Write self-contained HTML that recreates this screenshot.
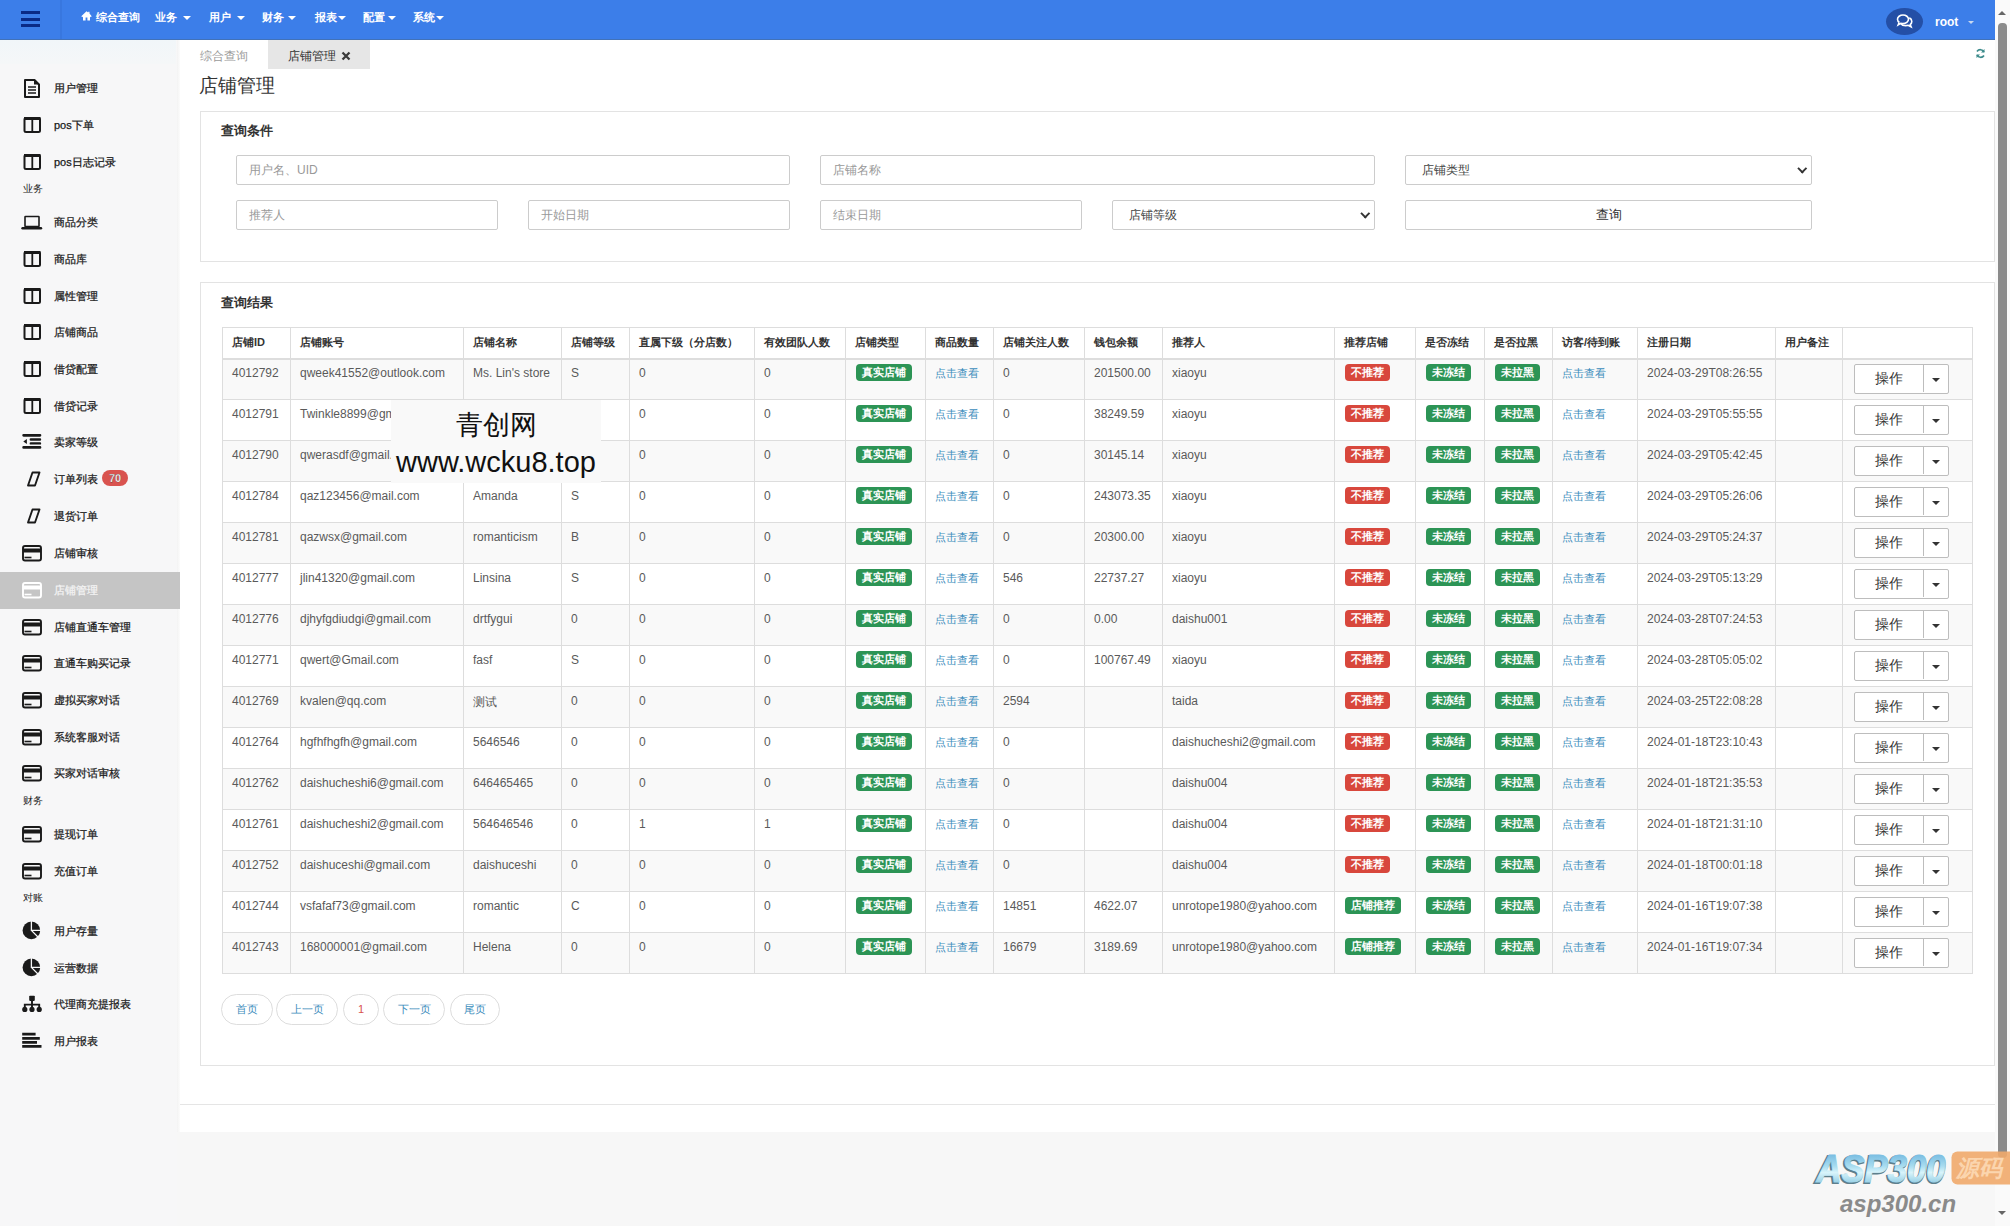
<!DOCTYPE html><html><head><meta charset="utf-8"><style>
*{box-sizing:border-box;margin:0;padding:0}
html,body{width:2010px;height:1226px;overflow:hidden;background:#f7f7f7;font-family:"Liberation Sans",sans-serif;color:#333}
#top{position:absolute;left:0;top:0;width:1995px;height:40px;background:#3c7ee9}
.ham{position:absolute;left:21px;width:19px;height:3px;background:#0a2a86}
.vdiv{position:absolute;left:60px;top:0;width:2px;height:40px;background:#3877df}
.nav{position:absolute;top:10px;color:#fff;font-size:11px;font-weight:bold;white-space:nowrap;line-height:14px}
.ncar{position:absolute;top:16px;width:0;height:0;border-left:4px solid transparent;border-right:4px solid transparent;border-top:4px solid #fff}
.caret{display:inline-block;width:0;height:0;border-left:4px solid transparent;border-right:4px solid transparent;border-top:4px solid #fff;vertical-align:middle;margin-left:4px;margin-top:-2px}
#chat{position:absolute;left:1885.5px;top:8px;width:37px;height:27px;border-radius:50%;background:#244fa6}
#root{position:absolute;left:1935px;top:15px;color:#fff;font-size:12px;font-weight:bold;line-height:14px}
#side{position:absolute;left:0;top:40px;width:177px;height:1186px;background:#f7f7f8}
#sideedge{position:absolute;left:177px;top:40px;width:4px;height:1092px;background:linear-gradient(to right,#f3f3f3,#fff)}
.si{position:absolute;left:0;width:180px;height:36px}
.si .tx{position:absolute;left:54px;top:0;line-height:36px;font-size:11px;color:#1a1a1a;white-space:nowrap;-webkit-text-stroke:0.25px #1a1a1a}
.si svg{position:absolute;left:22px;top:9px}
.si.act{background:#c5c5c5;height:37px}
.si.act .tx{color:#f4f4f4;-webkit-text-stroke:0.25px #f4f4f4}
.badge{display:inline-block;background:#d9534f;color:#fff;font-weight:bold;font-size:11px;line-height:16px;height:16px;padding:0 7px;border-radius:8px;margin-left:4px;vertical-align:1px}
.sl{position:absolute;left:23px;font-size:10px;color:#222;line-height:12px}
#main{position:absolute;left:180px;top:40px;width:1815px;height:1092px;background:#fff}
#scroll{position:absolute;left:1995px;top:0;width:15px;height:1226px;background:#fafafa}
#thumb{position:absolute;left:1998px;top:23px;width:8.7px;height:1135px;border-radius:4px;background:#8b8b8b}
.tab0{position:absolute;left:200px;top:48px;font-size:12px;color:#9a9a9a}
.tab1{position:absolute;left:268px;top:40px;width:102px;height:29px;background:#e6e6e6;font-size:12px;color:#333;padding-left:20px;line-height:32px}
h1{position:absolute;left:199px;top:73px;font-size:19px;font-weight:normal;color:#333}
.panel{position:absolute;left:200px;width:1795px;border:1px solid #e3e3e3;background:#fff}
.ptitle{position:absolute;left:20px;font-size:13px;margin-top:-2px;font-weight:bold;color:#333}
.inp{position:absolute;height:30px;border:1px solid #ccc;border-radius:2px;background:#fff;font-size:12px;color:#999;padding-left:12px;line-height:28px}
.sel{color:#444;padding-left:16px}
.sel:after{content:"";position:absolute;right:5.5px;top:8.5px;width:4.5px;height:4.5px;border-right:2px solid #333;border-bottom:2px solid #333;transform:rotate(45deg)}
.btn{position:absolute;height:30px;border:1px solid #ccc;border-radius:2px;background:#fff;font-size:13px;color:#333;text-align:center;line-height:28px}
table{position:absolute;left:222px;top:327px;border-collapse:collapse;table-layout:fixed}
td,th{border:1px solid #ddd;font-size:12px;vertical-align:top;padding:6.5px 0 0 9px;text-align:left;white-space:nowrap;overflow:hidden}
th{height:31px;color:#333;font-weight:bold;border-bottom:2px solid #ddd;padding-top:7px;font-size:11px}
td{height:41px;color:#5a5a5a}
tr.odd td{background:#f9f9f9}
.lbl{display:inline-block;color:#fff;font-size:11px;font-weight:bold;line-height:17px;height:17px;padding:0 6px;border-radius:4px;position:relative;top:-2px;left:1px}
.g{background:#2c9455}
.r{background:#d8473c}
.lnk{color:#3c8dbc;font-size:11px}
.op{position:absolute;height:29.5px;border:1px solid #bdbdbd;border-radius:2px;background:#fff}
.op .a{position:absolute;left:0;top:0;width:69px;height:27px;border-right:1px solid #bdbdbd;font-size:14px;color:#333;text-align:center;line-height:27px}
.op .c{position:absolute;left:77px;top:12.5px;width:0;height:0;border-left:4px solid transparent;border-right:4px solid transparent;border-top:4px solid #333}
.pg{position:absolute;top:993.5px;height:31px;border:1px solid #ddd;border-radius:16px;background:#fff;font-size:11px;color:#3c8dbc;text-align:center;line-height:29px}
#wm{position:absolute;left:391px;top:400px;width:210px;height:83px;background:#f9f9f9;text-align:center;color:#111}
</style></head><body>
<div id="top"><div class="ham" style="top:11px"></div><div class="ham" style="top:17.5px"></div><div class="ham" style="top:24px"></div><div class="vdiv"></div><div style="position:absolute;left:0;top:38.5px;width:1995px;height:1.5px;background:#4272b8"></div>
<div class="nav" style="left:95.5px">综合查询</div>
<div class="nav" style="left:155px">业务</div>
<div class="ncar" style="left:183px"></div>
<div class="nav" style="left:209px">用户</div>
<div class="ncar" style="left:237px"></div>
<div class="nav" style="left:262px">财务</div>
<div class="ncar" style="left:288px"></div>
<div class="nav" style="left:314.5px">报表</div>
<div class="ncar" style="left:338px"></div>
<div class="nav" style="left:363px">配置</div>
<div class="ncar" style="left:387.5px"></div>
<div class="nav" style="left:413px">系统</div>
<div class="ncar" style="left:436px"></div>
<svg style="position:absolute;left:81px;top:11px" width="11" height="10" viewBox="0 0 11 10"><path d="M5.5 0.3L0.3 5.2l1 1L2 5.6V9.6h2.6V6.6h1.8v3h2.6V5.6l0.7 0.6 1-1L8.5 2.6V0.8H7.2v0.7z" fill="#fff"/></svg>
<div id="chat"><svg width="37" height="27" viewBox="0 0 37 27"><path d="M13.5 14.5c-1.2-0.6-2-1.8-2-3.2 0-2.4 2.5-4.3 5.5-4.3s5.5 1.9 5.5 4.3-2.5 4.3-5.5 4.3c-0.8 0-1.5-0.1-2.2-0.3l-2.6 1.5 0.8-2" fill="none" stroke="#fff" stroke-width="1.6"/><path d="M23.3 9.8c1.5 0.8 2.5 2.1 2.5 3.6 0 1.2-0.6 2.3-1.6 3.1l0.9 2.3-3-1.5c-0.7 0.2-1.5 0.3-2.3 0.3-2.2 0-4.2-0.9-5.2-2.2" fill="none" stroke="#fff" stroke-width="1.6"/></svg></div>
<div id="root">root</div><div class="ncar" style="left:1968px;top:20.5px;border-top-color:#c8d8f0;border-left-width:3.5px;border-right-width:3.5px;border-top-width:3px"></div>
</div>
<div id="side"></div><div id="sideedge"></div><div style="position:absolute;left:0;top:40px;width:176px;height:24px;background:linear-gradient(#f1f6f9,#f5f7f8)"></div>
<div class="si" style="top:70px"><svg width="50" height="36" viewBox="0 -18 50 36" style="position:absolute;left:0;top:0"><path d="M25 -8h9.5l4.5 4.5v12.5h-14z" fill="none" stroke="#1a1a1a" stroke-width="2" stroke-linejoin="round"/><path d="M34 -8.5v5h5" fill="#1a1a1a"/><path d="M28 -1h8M28 2h8M28 5h8" stroke="#1a1a1a" stroke-width="1.4"/></svg><div class="tx">用户管理</div></div>
<div class="si" style="top:107px"><svg width="50" height="36" viewBox="0 -18 50 36" style="position:absolute;left:0;top:0"><rect x="24.5" y="-7" width="15.5" height="14" rx="1.5" fill="none" stroke="#1a1a1a" stroke-width="2"/><path d="M24 -6.5h16.5" stroke="#1a1a1a" stroke-width="3"/><path d="M32.3 -7v14" stroke="#1a1a1a" stroke-width="1.8"/></svg><div class="tx">pos下单</div></div>
<div class="si" style="top:144px"><svg width="50" height="36" viewBox="0 -18 50 36" style="position:absolute;left:0;top:0"><rect x="24.5" y="-7" width="15.5" height="14" rx="1.5" fill="none" stroke="#1a1a1a" stroke-width="2"/><path d="M24 -6.5h16.5" stroke="#1a1a1a" stroke-width="3"/><path d="M32.3 -7v14" stroke="#1a1a1a" stroke-width="1.8"/></svg><div class="tx">pos日志记录</div></div>
<div class="sl" style="top:183px">业务</div>
<div class="si" style="top:204px"><svg width="50" height="36" viewBox="0 -18 50 36" style="position:absolute;left:0;top:0"><rect x="25" y="-5.5" width="14" height="10" rx="0.5" fill="none" stroke="#1a1a1a" stroke-width="1.6"/><path d="M22.5 6.2H41" stroke="#1a1a1a" stroke-width="2.4" stroke-linecap="round"/></svg><div class="tx">商品分类</div></div>
<div class="si" style="top:241px"><svg width="50" height="36" viewBox="0 -18 50 36" style="position:absolute;left:0;top:0"><rect x="24.5" y="-7" width="15.5" height="14" rx="1.5" fill="none" stroke="#1a1a1a" stroke-width="2"/><path d="M24 -6.5h16.5" stroke="#1a1a1a" stroke-width="3"/><path d="M32.3 -7v14" stroke="#1a1a1a" stroke-width="1.8"/></svg><div class="tx">商品库</div></div>
<div class="si" style="top:278px"><svg width="50" height="36" viewBox="0 -18 50 36" style="position:absolute;left:0;top:0"><rect x="24.5" y="-7" width="15.5" height="14" rx="1.5" fill="none" stroke="#1a1a1a" stroke-width="2"/><path d="M24 -6.5h16.5" stroke="#1a1a1a" stroke-width="3"/><path d="M32.3 -7v14" stroke="#1a1a1a" stroke-width="1.8"/></svg><div class="tx">属性管理</div></div>
<div class="si" style="top:314px"><svg width="50" height="36" viewBox="0 -18 50 36" style="position:absolute;left:0;top:0"><rect x="24.5" y="-7" width="15.5" height="14" rx="1.5" fill="none" stroke="#1a1a1a" stroke-width="2"/><path d="M24 -6.5h16.5" stroke="#1a1a1a" stroke-width="3"/><path d="M32.3 -7v14" stroke="#1a1a1a" stroke-width="1.8"/></svg><div class="tx">店铺商品</div></div>
<div class="si" style="top:351px"><svg width="50" height="36" viewBox="0 -18 50 36" style="position:absolute;left:0;top:0"><rect x="24.5" y="-7" width="15.5" height="14" rx="1.5" fill="none" stroke="#1a1a1a" stroke-width="2"/><path d="M24 -6.5h16.5" stroke="#1a1a1a" stroke-width="3"/><path d="M32.3 -7v14" stroke="#1a1a1a" stroke-width="1.8"/></svg><div class="tx">借贷配置</div></div>
<div class="si" style="top:388px"><svg width="50" height="36" viewBox="0 -18 50 36" style="position:absolute;left:0;top:0"><rect x="24.5" y="-7" width="15.5" height="14" rx="1.5" fill="none" stroke="#1a1a1a" stroke-width="2"/><path d="M24 -6.5h16.5" stroke="#1a1a1a" stroke-width="3"/><path d="M32.3 -7v14" stroke="#1a1a1a" stroke-width="1.8"/></svg><div class="tx">借贷记录</div></div>
<div class="si" style="top:424px"><svg width="50" height="36" viewBox="0 -18 50 36" style="position:absolute;left:0;top:0"><path d="M23.6 -6.7H40M23.6 5.4H40" stroke="#1a1a1a" stroke-width="2.7" stroke-linecap="round"/><path d="M30.8 -2.5H40M30.8 1.4H40" stroke="#1a1a1a" stroke-width="2.4" stroke-linecap="round"/><path d="M23.3 -0.5l3.6 -2.6v5.2z" fill="#1a1a1a"/></svg><div class="tx">卖家等级</div></div>
<div class="si" style="top:461px"><svg width="50" height="36" viewBox="0 -18 50 36" style="position:absolute;left:0;top:0"><path d="M32.5 -6.5h7l-4.5 13h-7z" fill="none" stroke="#1a1a1a" stroke-width="1.9" stroke-linejoin="round"/></svg><div class="tx">订单列表<span class="badge">70</span></div></div>
<div class="si" style="top:498px"><svg width="50" height="36" viewBox="0 -18 50 36" style="position:absolute;left:0;top:0"><path d="M32.5 -6.5h7l-4.5 13h-7z" fill="none" stroke="#1a1a1a" stroke-width="1.9" stroke-linejoin="round"/></svg><div class="tx">退货订单</div></div>
<div class="si" style="top:535px"><svg width="50" height="36" viewBox="0 -18 50 36" style="position:absolute;left:0;top:0"><rect x="23" y="-7" width="18" height="14.5" rx="2" fill="none" stroke="#1a1a1a" stroke-width="1.9"/><rect x="23" y="-4.5" width="18" height="4" fill="#1a1a1a"/><path d="M24.5 4.5h7" stroke="#1a1a1a" stroke-width="1.6"/></svg><div class="tx">店铺审核</div></div>
<div class="si act" style="top:572px"><svg width="50" height="36" viewBox="0 -18 50 36" style="position:absolute;left:0;top:0"><rect x="23" y="-7" width="18" height="14.5" rx="2" fill="none" stroke="#fff" stroke-width="1.9"/><rect x="23" y="-4.5" width="18" height="4" fill="#fff"/><path d="M24.5 4.5h7" stroke="#fff" stroke-width="1.6"/></svg><div class="tx">店铺管理</div></div>
<div class="si" style="top:609px"><svg width="50" height="36" viewBox="0 -18 50 36" style="position:absolute;left:0;top:0"><rect x="23" y="-7" width="18" height="14.5" rx="2" fill="none" stroke="#1a1a1a" stroke-width="1.9"/><rect x="23" y="-4.5" width="18" height="4" fill="#1a1a1a"/><path d="M24.5 4.5h7" stroke="#1a1a1a" stroke-width="1.6"/></svg><div class="tx">店铺直通车管理</div></div>
<div class="si" style="top:645px"><svg width="50" height="36" viewBox="0 -18 50 36" style="position:absolute;left:0;top:0"><rect x="23" y="-7" width="18" height="14.5" rx="2" fill="none" stroke="#1a1a1a" stroke-width="1.9"/><rect x="23" y="-4.5" width="18" height="4" fill="#1a1a1a"/><path d="M24.5 4.5h7" stroke="#1a1a1a" stroke-width="1.6"/></svg><div class="tx">直通车购买记录</div></div>
<div class="si" style="top:682px"><svg width="50" height="36" viewBox="0 -18 50 36" style="position:absolute;left:0;top:0"><rect x="23" y="-7" width="18" height="14.5" rx="2" fill="none" stroke="#1a1a1a" stroke-width="1.9"/><rect x="23" y="-4.5" width="18" height="4" fill="#1a1a1a"/><path d="M24.5 4.5h7" stroke="#1a1a1a" stroke-width="1.6"/></svg><div class="tx">虚拟买家对话</div></div>
<div class="si" style="top:719px"><svg width="50" height="36" viewBox="0 -18 50 36" style="position:absolute;left:0;top:0"><rect x="23" y="-7" width="18" height="14.5" rx="2" fill="none" stroke="#1a1a1a" stroke-width="1.9"/><rect x="23" y="-4.5" width="18" height="4" fill="#1a1a1a"/><path d="M24.5 4.5h7" stroke="#1a1a1a" stroke-width="1.6"/></svg><div class="tx">系统客服对话</div></div>
<div class="si" style="top:755px"><svg width="50" height="36" viewBox="0 -18 50 36" style="position:absolute;left:0;top:0"><rect x="23" y="-7" width="18" height="14.5" rx="2" fill="none" stroke="#1a1a1a" stroke-width="1.9"/><rect x="23" y="-4.5" width="18" height="4" fill="#1a1a1a"/><path d="M24.5 4.5h7" stroke="#1a1a1a" stroke-width="1.6"/></svg><div class="tx">买家对话审核</div></div>
<div class="sl" style="top:795px">财务</div>
<div class="si" style="top:816px"><svg width="50" height="36" viewBox="0 -18 50 36" style="position:absolute;left:0;top:0"><rect x="23" y="-7" width="18" height="14.5" rx="2" fill="none" stroke="#1a1a1a" stroke-width="1.9"/><rect x="23" y="-4.5" width="18" height="4" fill="#1a1a1a"/><path d="M24.5 4.5h7" stroke="#1a1a1a" stroke-width="1.6"/></svg><div class="tx">提现订单</div></div>
<div class="si" style="top:853px"><svg width="50" height="36" viewBox="0 -18 50 36" style="position:absolute;left:0;top:0"><rect x="23" y="-7" width="18" height="14.5" rx="2" fill="none" stroke="#1a1a1a" stroke-width="1.9"/><rect x="23" y="-4.5" width="18" height="4" fill="#1a1a1a"/><path d="M24.5 4.5h7" stroke="#1a1a1a" stroke-width="1.6"/></svg><div class="tx">充值订单</div></div>
<div class="sl" style="top:892px">对账</div>
<div class="si" style="top:913px"><svg width="50" height="36" viewBox="0 -18 50 36" style="position:absolute;left:0;top:0"><circle cx="31.4" cy="-0.6" r="8.8" fill="#1a1a1a"/><path d="M31.4 -10v9.4h10.5M31.4 -0.6l6.8 6.8" fill="none" stroke="#f7f7f8" stroke-width="1.3"/></svg><div class="tx">用户存量</div></div>
<div class="si" style="top:950px"><svg width="50" height="36" viewBox="0 -18 50 36" style="position:absolute;left:0;top:0"><circle cx="31.4" cy="-0.6" r="8.8" fill="#1a1a1a"/><path d="M31.4 -10v9.4h10.5M31.4 -0.6l6.8 6.8" fill="none" stroke="#f7f7f8" stroke-width="1.3"/></svg><div class="tx">运营数据</div></div>
<div class="si" style="top:986px"><svg width="50" height="36" viewBox="0 -18 50 36" style="position:absolute;left:0;top:0"><rect x="29.2" y="-8.3" width="5.6" height="5.2" rx="0.8" fill="#1a1a1a"/><path d="M32 -4v4.6M24.8 4v-3.4h14.4v3.4M32 0.6v3.4" fill="none" stroke="#1a1a1a" stroke-width="1.9"/><circle cx="24.8" cy="5.4" r="2.6" fill="#1a1a1a"/><circle cx="32" cy="5.4" r="2.6" fill="#1a1a1a"/><circle cx="39.2" cy="5.4" r="2.6" fill="#1a1a1a"/></svg><div class="tx">代理商充提报表</div></div>
<div class="si" style="top:1023px"><svg width="50" height="36" viewBox="0 -18 50 36" style="position:absolute;left:0;top:0"><path d="M22.2 -6.8H35.6M22.2 -2.6H39.8M22.2 1.4H37M22.2 5.4H41.5" stroke="#1a1a1a" stroke-width="2.8"/></svg><div class="tx">用户报表</div></div>
<div id="main"></div>
<div class="tab0">综合查询</div><div class="tab1">店铺管理</div><svg style="position:absolute;left:341px;top:51px" width="10" height="10" viewBox="0 0 10 10"><path d="M1.5 1.5l7 7M8.5 1.5l-7 7" stroke="#3a3a3a" stroke-width="2.3"/></svg>
<h1>店铺管理</h1>
<div class="panel" style="top:111px;height:151px"><div class="ptitle" style="top:12px">查询条件</div></div>
<div class="inp" style="left:236px;top:155px;width:554px">用户名、UID</div>
<div class="inp" style="left:820px;top:155px;width:555px">店铺名称</div>
<div class="inp sel" style="left:1405px;top:155px;width:407px">店铺类型</div>
<div class="inp" style="left:236px;top:200px;width:262px">推荐人</div>
<div class="inp" style="left:528px;top:200px;width:262px">开始日期</div>
<div class="inp" style="left:820px;top:200px;width:262px">结束日期</div>
<div class="inp sel" style="left:1112px;top:200px;width:263px">店铺等级</div>
<div class="btn" style="left:1405px;top:200px;width:407px">查询</div>
<div class="panel" style="top:282px;height:784px"><div class="ptitle" style="top:13px">查询结果</div></div>
<table>
<colgroup><col style="width:68px"><col style="width:173px"><col style="width:98px"><col style="width:68px"><col style="width:125px"><col style="width:91px"><col style="width:80px"><col style="width:68px"><col style="width:91px"><col style="width:78px"><col style="width:172px"><col style="width:81px"><col style="width:69px"><col style="width:68px"><col style="width:85px"><col style="width:138px"><col style="width:67px"><col style="width:130px"></colgroup>
<tr><th>店铺ID</th><th>店铺账号</th><th>店铺名称</th><th>店铺等级</th><th>直属下级（分店数）</th><th>有效团队人数</th><th>店铺类型</th><th>商品数量</th><th>店铺关注人数</th><th>钱包余额</th><th>推荐人</th><th>推荐店铺</th><th>是否冻结</th><th>是否拉黑</th><th>访客/待到账</th><th>注册日期</th><th>用户备注</th><th></th></tr>
<tr class="odd"><td>4012792</td><td>qweek41552@outlook.com</td><td>Ms. Lin's store</td><td>S</td><td>0</td><td>0</td><td><span class="lbl g">真实店铺</span></td><td><span class="lnk">点击查看</span></td><td>0</td><td>201500.00</td><td>xiaoyu</td><td><span class="lbl r">不推荐</span></td><td><span class="lbl g">未冻结</span></td><td><span class="lbl g">未拉黑</span></td><td><span class="lnk">点击查看</span></td><td>2024-03-29T08:26:55</td><td></td><td></td></tr>
<tr><td>4012791</td><td>Twinkle8899@gmail.com</td><td>Lin</td><td>S</td><td>0</td><td>0</td><td><span class="lbl g">真实店铺</span></td><td><span class="lnk">点击查看</span></td><td>0</td><td>38249.59</td><td>xiaoyu</td><td><span class="lbl r">不推荐</span></td><td><span class="lbl g">未冻结</span></td><td><span class="lbl g">未拉黑</span></td><td><span class="lnk">点击查看</span></td><td>2024-03-29T05:55:55</td><td></td><td></td></tr>
<tr class="odd"><td>4012790</td><td>qwerasdf@gmail.com</td><td>qwer</td><td>S</td><td>0</td><td>0</td><td><span class="lbl g">真实店铺</span></td><td><span class="lnk">点击查看</span></td><td>0</td><td>30145.14</td><td>xiaoyu</td><td><span class="lbl r">不推荐</span></td><td><span class="lbl g">未冻结</span></td><td><span class="lbl g">未拉黑</span></td><td><span class="lnk">点击查看</span></td><td>2024-03-29T05:42:45</td><td></td><td></td></tr>
<tr><td>4012784</td><td>qaz123456@mail.com</td><td>Amanda</td><td>S</td><td>0</td><td>0</td><td><span class="lbl g">真实店铺</span></td><td><span class="lnk">点击查看</span></td><td>0</td><td>243073.35</td><td>xiaoyu</td><td><span class="lbl r">不推荐</span></td><td><span class="lbl g">未冻结</span></td><td><span class="lbl g">未拉黑</span></td><td><span class="lnk">点击查看</span></td><td>2024-03-29T05:26:06</td><td></td><td></td></tr>
<tr class="odd"><td>4012781</td><td>qazwsx@gmail.com</td><td>romanticism</td><td>B</td><td>0</td><td>0</td><td><span class="lbl g">真实店铺</span></td><td><span class="lnk">点击查看</span></td><td>0</td><td>20300.00</td><td>xiaoyu</td><td><span class="lbl r">不推荐</span></td><td><span class="lbl g">未冻结</span></td><td><span class="lbl g">未拉黑</span></td><td><span class="lnk">点击查看</span></td><td>2024-03-29T05:24:37</td><td></td><td></td></tr>
<tr><td>4012777</td><td>jlin41320@gmail.com</td><td>Linsina</td><td>S</td><td>0</td><td>0</td><td><span class="lbl g">真实店铺</span></td><td><span class="lnk">点击查看</span></td><td>546</td><td>22737.27</td><td>xiaoyu</td><td><span class="lbl r">不推荐</span></td><td><span class="lbl g">未冻结</span></td><td><span class="lbl g">未拉黑</span></td><td><span class="lnk">点击查看</span></td><td>2024-03-29T05:13:29</td><td></td><td></td></tr>
<tr class="odd"><td>4012776</td><td>djhyfgdiudgi@gmail.com</td><td>drtfygui</td><td>0</td><td>0</td><td>0</td><td><span class="lbl g">真实店铺</span></td><td><span class="lnk">点击查看</span></td><td>0</td><td>0.00</td><td>daishu001</td><td><span class="lbl r">不推荐</span></td><td><span class="lbl g">未冻结</span></td><td><span class="lbl g">未拉黑</span></td><td><span class="lnk">点击查看</span></td><td>2024-03-28T07:24:53</td><td></td><td></td></tr>
<tr><td>4012771</td><td>qwert@Gmail.com</td><td>fasf</td><td>S</td><td>0</td><td>0</td><td><span class="lbl g">真实店铺</span></td><td><span class="lnk">点击查看</span></td><td>0</td><td>100767.49</td><td>xiaoyu</td><td><span class="lbl r">不推荐</span></td><td><span class="lbl g">未冻结</span></td><td><span class="lbl g">未拉黑</span></td><td><span class="lnk">点击查看</span></td><td>2024-03-28T05:05:02</td><td></td><td></td></tr>
<tr class="odd"><td>4012769</td><td>kvalen@qq.com</td><td>测试</td><td>0</td><td>0</td><td>0</td><td><span class="lbl g">真实店铺</span></td><td><span class="lnk">点击查看</span></td><td>2594</td><td></td><td>taida</td><td><span class="lbl r">不推荐</span></td><td><span class="lbl g">未冻结</span></td><td><span class="lbl g">未拉黑</span></td><td><span class="lnk">点击查看</span></td><td>2024-03-25T22:08:28</td><td></td><td></td></tr>
<tr><td>4012764</td><td>hgfhfhgfh@gmail.com</td><td>5646546</td><td>0</td><td>0</td><td>0</td><td><span class="lbl g">真实店铺</span></td><td><span class="lnk">点击查看</span></td><td>0</td><td></td><td>daishucheshi2@gmail.com</td><td><span class="lbl r">不推荐</span></td><td><span class="lbl g">未冻结</span></td><td><span class="lbl g">未拉黑</span></td><td><span class="lnk">点击查看</span></td><td>2024-01-18T23:10:43</td><td></td><td></td></tr>
<tr class="odd"><td>4012762</td><td>daishucheshi6@gmail.com</td><td>646465465</td><td>0</td><td>0</td><td>0</td><td><span class="lbl g">真实店铺</span></td><td><span class="lnk">点击查看</span></td><td>0</td><td></td><td>daishu004</td><td><span class="lbl r">不推荐</span></td><td><span class="lbl g">未冻结</span></td><td><span class="lbl g">未拉黑</span></td><td><span class="lnk">点击查看</span></td><td>2024-01-18T21:35:53</td><td></td><td></td></tr>
<tr><td>4012761</td><td>daishucheshi2@gmail.com</td><td>564646546</td><td>0</td><td>1</td><td>1</td><td><span class="lbl g">真实店铺</span></td><td><span class="lnk">点击查看</span></td><td>0</td><td></td><td>daishu004</td><td><span class="lbl r">不推荐</span></td><td><span class="lbl g">未冻结</span></td><td><span class="lbl g">未拉黑</span></td><td><span class="lnk">点击查看</span></td><td>2024-01-18T21:31:10</td><td></td><td></td></tr>
<tr class="odd"><td>4012752</td><td>daishuceshi@gmail.com</td><td>daishuceshi</td><td>0</td><td>0</td><td>0</td><td><span class="lbl g">真实店铺</span></td><td><span class="lnk">点击查看</span></td><td>0</td><td></td><td>daishu004</td><td><span class="lbl r">不推荐</span></td><td><span class="lbl g">未冻结</span></td><td><span class="lbl g">未拉黑</span></td><td><span class="lnk">点击查看</span></td><td>2024-01-18T00:01:18</td><td></td><td></td></tr>
<tr><td>4012744</td><td>vsfafaf73@gmail.com</td><td>romantic</td><td>C</td><td>0</td><td>0</td><td><span class="lbl g">真实店铺</span></td><td><span class="lnk">点击查看</span></td><td>14851</td><td>4622.07</td><td>unrotope1980@yahoo.com</td><td><span class="lbl g">店铺推荐</span></td><td><span class="lbl g">未冻结</span></td><td><span class="lbl g">未拉黑</span></td><td><span class="lnk">点击查看</span></td><td>2024-01-16T19:07:38</td><td></td><td></td></tr>
<tr class="odd"><td>4012743</td><td>168000001@gmail.com</td><td>Helena</td><td>0</td><td>0</td><td>0</td><td><span class="lbl g">真实店铺</span></td><td><span class="lnk">点击查看</span></td><td>16679</td><td>3189.69</td><td>unrotope1980@yahoo.com</td><td><span class="lbl g">店铺推荐</span></td><td><span class="lbl g">未冻结</span></td><td><span class="lbl g">未拉黑</span></td><td><span class="lnk">点击查看</span></td><td>2024-01-16T19:07:34</td><td></td><td></td></tr>
</table>
<div class="op" style="left:1854px;top:364px;width:95px"><div class="a">操作</div><div class="c"></div></div>
<div class="op" style="left:1854px;top:405px;width:95px"><div class="a">操作</div><div class="c"></div></div>
<div class="op" style="left:1854px;top:446px;width:95px"><div class="a">操作</div><div class="c"></div></div>
<div class="op" style="left:1854px;top:487px;width:95px"><div class="a">操作</div><div class="c"></div></div>
<div class="op" style="left:1854px;top:528px;width:95px"><div class="a">操作</div><div class="c"></div></div>
<div class="op" style="left:1854px;top:569px;width:95px"><div class="a">操作</div><div class="c"></div></div>
<div class="op" style="left:1854px;top:610px;width:95px"><div class="a">操作</div><div class="c"></div></div>
<div class="op" style="left:1854px;top:651px;width:95px"><div class="a">操作</div><div class="c"></div></div>
<div class="op" style="left:1854px;top:692px;width:95px"><div class="a">操作</div><div class="c"></div></div>
<div class="op" style="left:1854px;top:733px;width:95px"><div class="a">操作</div><div class="c"></div></div>
<div class="op" style="left:1854px;top:774px;width:95px"><div class="a">操作</div><div class="c"></div></div>
<div class="op" style="left:1854px;top:815px;width:95px"><div class="a">操作</div><div class="c"></div></div>
<div class="op" style="left:1854px;top:856px;width:95px"><div class="a">操作</div><div class="c"></div></div>
<div class="op" style="left:1854px;top:897px;width:95px"><div class="a">操作</div><div class="c"></div></div>
<div class="op" style="left:1854px;top:938px;width:95px"><div class="a">操作</div><div class="c"></div></div>
<div class="pg" style="left:221px;width:52px;color:#3c8dbc">首页</div>
<div class="pg" style="left:276px;width:62px;color:#3c8dbc">上一页</div>
<div class="pg" style="left:343px;width:36px;color:#d9534f">1</div>
<div class="pg" style="left:383px;width:62px;color:#3c8dbc">下一页</div>
<div class="pg" style="left:450px;width:50px;color:#3c8dbc">尾页</div>
<div style="position:absolute;left:180px;top:1104px;width:1815px;height:1px;background:#e5e5e5"></div>
<div id="wm"><div style="font-size:27px;line-height:28px;margin-top:11px">青创网</div><div style="font-size:29px;line-height:36px;margin-top:5px">www.wcku8.top</div></div>
<svg style="position:absolute;left:1975px;top:48px" width="11" height="11" viewBox="0 0 11 11"><path d="M9 4A4 4 0 0 0 2 3.5M2 7a4 4 0 0 0 7 .5" fill="none" stroke="#3b8a8a" stroke-width="1.6"/><path d="M9.5 1v3.5H6z M1.5 10V6.5H5z" fill="#3b8a8a"/></svg>
<div id="scroll"></div><div id="thumb"></div>
<div style="position:absolute;left:1998px;top:11px;width:0;height:0;border-left:4px solid transparent;border-right:4px solid transparent;border-bottom:4px solid #666"></div>
<div style="position:absolute;left:1998px;top:1211px;width:0;height:0;border-left:4px solid transparent;border-right:4px solid transparent;border-top:4px solid #666"></div>
<svg style="position:absolute;left:1800px;top:1140px" width="210" height="86" viewBox="0 0 210 86">
<defs><linearGradient id="lg" x1="0" y1="0" x2="0" y2="1"><stop offset="0" stop-color="#5aa8d8"/><stop offset="0.45" stop-color="#a8dcf0"/><stop offset="0.6" stop-color="#d8f4fb"/><stop offset="1" stop-color="#6cb8d8"/></linearGradient></defs>
<text x="15" y="42.8" font-family="Liberation Sans" font-weight="bold" font-style="italic" font-size="39" textLength="130" lengthAdjust="spacingAndGlyphs" fill="#5d7f8c" stroke="#5d7f8c" stroke-width="2.2">ASP300</text>
<text x="16.5" y="41.8" font-family="Liberation Sans" font-weight="bold" font-style="italic" font-size="39" textLength="129" lengthAdjust="spacingAndGlyphs" fill="url(#lg)" stroke="url(#lg)" stroke-width="1">ASP300</text>
<rect x="151.5" y="11.5" width="70" height="33" rx="6" fill="#f0a86a" opacity="0.9"/>
<text x="156" y="36" font-family="Liberation Sans" font-weight="bold" font-style="italic" font-size="23" fill="#fbd5ae">源码</text>
<text x="40" y="72" font-family="Liberation Sans" font-weight="bold" font-style="italic" font-size="24" fill="#8a8a8a">asp300.cn</text>
</svg>
</body></html>
